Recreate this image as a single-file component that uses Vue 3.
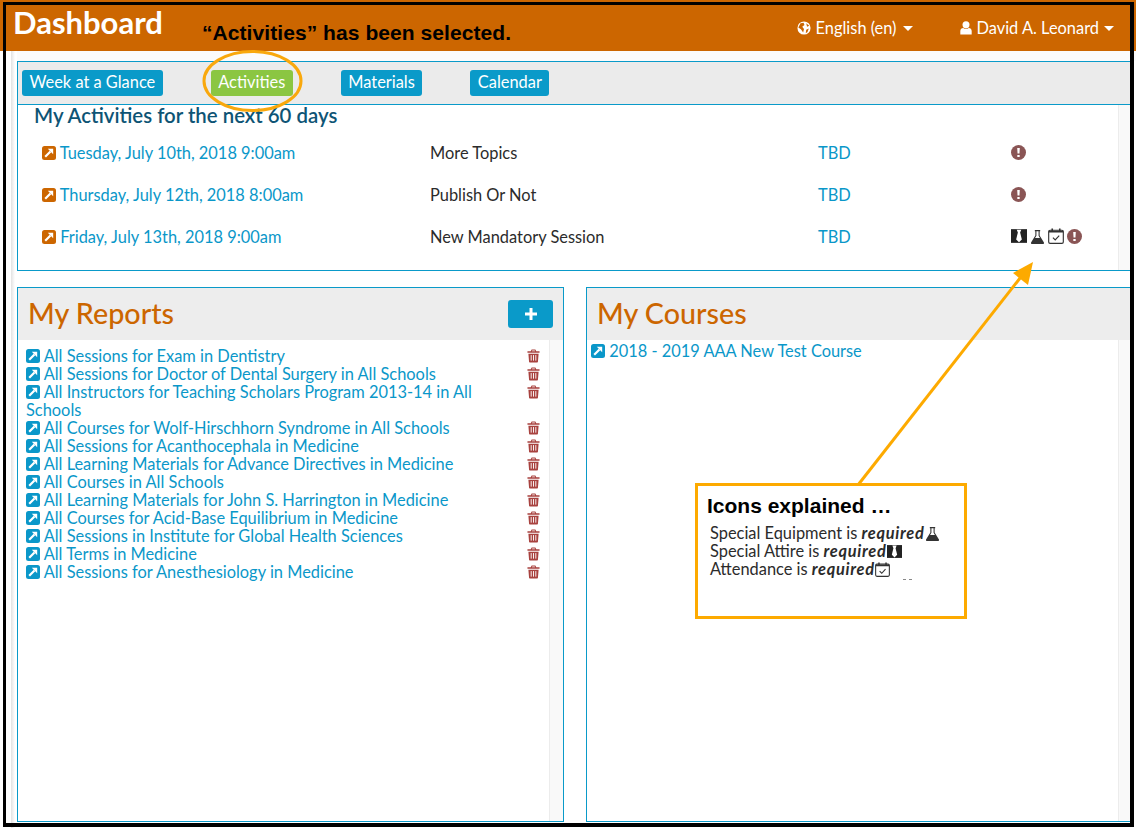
<template>
  <div class="page">
    <header class="topbar">
      <h1>Dashboard</h1>
      <div class="top-menus">
        <span class="menu lang">
          <svg viewBox="0 0 16 16" class="menu-icon"><circle cx="8" cy="8" r="7.500" fill="#fff" /><path d="M4 2.500 7.500 2l1 2.500-2.500 2 2 2.500-1 4-2.500-3.500L1.500 7.500zM10.500 10l3-1.500-1.500 4-2 1.500zM10.500 2.500l3.500 3-2.500 1z" fill="#cc6600" /></svg>
          English (en)
          <i class="caret"></i>
        </span>
        <span class="menu user">
          <svg viewBox="0 0 16 16" class="menu-icon"><circle cx="8" cy="4.200" r="4" fill="#fff" /><path d="M1.500 15.500V11.500c0-2.300 1.500-3.500 3.300-3.500 1.800 1.300 4.600 1.300 6.400 0 1.800 0 3.300 1.200 3.300 3.500v4z" fill="#fff" /></svg>
          David A. Leonard
          <i class="caret"></i>
        </span>
      </div>
    </header>

    <main class="main">
      <div class="gutter"></div>
      <div class="content">
        <nav class="tabs">
          <button v-for="tab in tabs" :key="tab" class="tab" :class="{ active: tab === 'Activities' }">{{ tab }}</button>
        </nav>

        <section class="activities">
          <div class="activities-body">
            <h2>My Activities for the next 60 days</h2>
            <div v-for="item in activities" :key="item.date" class="activity">
              <a class="date">
                <svg viewBox="0 0 14 14" class="ext orange"><rect width="14" height="14" rx="2.500" /><path d="M3.200 10.800 8.500 5.500" class="ext-arrow" /><path d="M5.800 2.800h5.400v5.400z" fill="#fff" /></svg>
                {{ item.date }}
              </a>
              <span>{{ item.title }}</span>
              <a>TBD</a>
              <span class="status">
                <template v-if="item.required">
                  <svg viewBox="0 0 14 14" class="status-icon wide"><path d="M0 1h14v12H0z" fill="#222" /><path d="M5 1.500h4L8 4l1.500 6L7 12.500 4.500 10 6 4z" fill="#fff" /></svg>
                  <svg viewBox="0 0 14 14" class="status-icon"><path d="M4.500 1h5v1H9v4l4 6.500c.3.700 0 1.500-1 1.500H2c-1 0-1.300-.8-1-1.500L5 6V2h-.5z" fill="#333" /><path d="M6 2h2v4.300L9.300 8.500H4.700L6 6.300z" fill="#fff" /></svg>
                  <svg viewBox="0 0 14 14" class="status-icon wide"><rect x=".6" y="2" width="12.800" height="11.400" rx="1.200" fill="#fff" stroke="#333" stroke-width="1" /><path d="M.6 2.500h12.800v1.500H.6zM3 .5h1.400v2.800H3zM9.600 .5H11v2.800H9.600z" fill="#333" /><path d="m4.300 8.500 2 2 3.500-3.800" fill="none" stroke="#333" stroke-width="1" /></svg>
                </template>
                <svg viewBox="0 0 14 14" class="status-icon"><circle cx="7" cy="7" r="7" fill="#8a5555" /><path d="M5.800 2.800h2.400L7.900 8H6.100z M5.900 9.300h2.200v2H5.900z" fill="#fff" /></svg>
              </span>
            </div>
          </div>
          <div class="strip"></div>
        </section>

        <div class="columns">
          <section class="panel reports">
            <div class="panel-head">
              <h3>My Reports</h3>
              <button class="add">
                <svg viewBox="0 0 14 14"><path d="M5.500 1h3v4.500H13v3H8.500V13h-3V8.500H1v-3h4.500z" fill="#fff" /></svg>
              </button>
            </div>
            <div class="panel-body">
              <ul class="report-list">
                <li v-for="report in reports" :key="report">
                  <a>
                    <svg viewBox="0 0 14 14" class="ext"><rect width="14" height="14" rx="2.500" /><path d="M3.200 10.800 8.500 5.500" class="ext-arrow" /><path d="M5.800 2.800h5.400v5.400z" fill="#fff" /></svg>
                    {{ report }}
                  </a>
                  <svg viewBox="0 0 14 14" class="trash"><path d="M5 0h4l1 2h3.500v1.500h-13V2H4zM5.700 1 5.300 2h3.400l-.4-1zM1.500 4.500h11l-.7 8.300c0 .7-.5 1.200-1.200 1.200H3.400c-.7 0-1.200-.5-1.200-1.200z" fill="#a8423f" /><path d="M4.500 6v6M7 6v6M9.500 6v6" stroke="#fff" stroke-width="1" /></svg>
                </li>
              </ul>
              <div class="strip"></div>
            </div>
          </section>

          <section class="panel courses">
            <div class="panel-head">
              <h3>My Courses</h3>
            </div>
            <div class="panel-body">
              <div class="course-list">
                <a>
                  <svg viewBox="0 0 14 14" class="ext"><rect width="14" height="14" rx="2.500" /><path d="M3.200 10.800 8.500 5.500" class="ext-arrow" /><path d="M5.800 2.800h5.400v5.400z" fill="#fff" /></svg>
                  2018 - 2019 AAA New Test Course
                </a>
              </div>
              <div class="strip"></div>
            </div>
          </section>
        </div>
      </div>
    </main>

    <!-- annotations pasted over the screenshot -->
    <div class="frame"></div>
    <div class="note">“Activities” has been selected.</div>
    <svg class="marks" viewBox="0 0 1136 828">
      <ellipse cx="252.500" cy="81" rx="48.500" ry="29.500" fill="none" stroke="#f9a80c" stroke-width="3" />
      <path d="M858 485 1024 273" fill="none" stroke="#fdaa00" stroke-width="3" />
      <path d="M1033 262 1028 285 1013 273z" fill="#fdaa00" />
    </svg>
    <div class="callout">
      <h4>Icons explained …</h4>
      <p>
        Special Equipment is <b>required</b>
        <svg viewBox="0 0 14 14" class="status-icon"><path d="M4.500 1h5v1H9v4l4 6.500c.3.700 0 1.500-1 1.500H2c-1 0-1.300-.8-1-1.500L5 6V2h-.5z" fill="#333" /><path d="M6 2h2v4.300L9.300 8.500H4.700L6 6.300z" fill="#fff" /></svg>
      </p>
      <p>
        Special Attire is <b>required</b>
        <svg viewBox="0 0 14 14" class="status-icon"><path d="M0 1h14v12H0z" fill="#222" /><path d="M5 1.500h4L8 4l1.500 6L7 12.500 4.500 10 6 4z" fill="#fff" /></svg>
      </p>
      <p>
        Attendance is <b>required</b>
        <svg viewBox="0 0 14 14" class="status-icon"><rect x=".6" y="2" width="12.800" height="11.400" rx="1.200" fill="#fff" stroke="#333" stroke-width="1" /><path d="M.6 2.500h12.800v1.500H.6zM3 .5h1.400v2.800H3zM9.600 .5H11v2.800H9.600z" fill="#333" /><path d="m4.300 8.500 2 2 3.500-3.800" fill="none" stroke="#333" stroke-width="1" /></svg>
      </p>
      <span class="specks"></span>
    </div>
  </div>
</template>

<script setup>
const tabs = ["Week at a Glance", "Activities", "Materials", "Calendar"];

const activities = [
  { date: "Tuesday, July 10th, 2018 9:00am", title: "More Topics", required: false },
  { date: "Thursday, July 12th, 2018 8:00am", title: "Publish Or Not", required: false },
  { date: "Friday, July 13th, 2018 9:00am", title: "New Mandatory Session", required: true },
];

const reports = [
  "All Sessions for Exam in Dentistry",
  "All Sessions for Doctor of Dental Surgery in All Schools",
  "All Instructors for Teaching Scholars Program 2013-14 in All Schools",
  "All Courses for Wolf-Hirschhorn Syndrome in All Schools",
  "All Sessions for Acanthocephala in Medicine",
  "All Learning Materials for Advance Directives in Medicine",
  "All Courses in All Schools",
  "All Learning Materials for John S. Harrington in Medicine",
  "All Courses for Acid-Base Equilibrium in Medicine",
  "All Sessions in Institute for Global Health Sciences",
  "All Terms in Medicine",
  "All Sessions for Anesthesiology in Medicine",
];
</script>

<style>
html,
body {
  margin: 0;
  background: #fff;
}
</style>

<style scoped>
.page {
  position: relative;
  width: 1136px;
  height: 828px;
  overflow: hidden;
  font-family: Lato, "Noto Sans", sans-serif;
  font-size: 16.4px;
  color: #2b2b2b;
  background: #fff;
}

a {
  color: #0a97c9;
}

.topbar {
  height: 51px;
  background: #cc6600;
  color: #fff;
  display: flex;
  justify-content: space-between;
  padding: 0 22px 0 13px;
  box-sizing: border-box;
}

.topbar h1 {
  margin: 4px 0 0;
  font-size: 31px;
  line-height: 36px;
  font-weight: 700;
}

.top-menus {
  display: flex;
  gap: 46px;
  padding-top: 18px;
  line-height: 20px;
}

.menu {
  display: flex;
  align-items: center;
  height: 20px;
  gap: 4px;
}

.lang {
  gap: 5px;
}

.menu-icon {
  width: 14px;
  height: 14px;
}

.caret {
  width: 0;
  height: 0;
  margin-left: 1px;
  border-left: 5.500px solid transparent;
  border-right: 5.500px solid transparent;
  border-top: 5.500px solid #fff;
}

.main {
  display: flex;
  height: 777px;
  padding-left: 11px;
  box-sizing: border-box;
}

.gutter {
  width: 4px;
  background: linear-gradient(to right, #e2e2e2, #fff);
}

.content {
  flex: 1;
  margin-left: 2px;
  padding-top: 10px;
  padding-right: 4px;
  display: flex;
  flex-direction: column;
  background: linear-gradient(#fbfbfb 10px, #fff 10px);
}

.tabs {
  height: 44px;
  box-sizing: border-box;
  display: flex;
  align-items: flex-start;
  gap: 48px;
  padding: 8px 0 0 4px;
  background: #ebebeb;
  border: 1px solid #0a9ac9;
  border-right: none;
}

.tab {
  height: 26px;
  padding: 0 7.500px 2px;
  border: none;
  border-radius: 3px;
  background: #0a9ac9;
  color: #fff;
  font: inherit;
  line-height: 24px;
}

.tab.active {
  background: #8bc642;
}

.activities {
  height: 166px;
  box-sizing: border-box;
  display: flex;
  border-left: 1px solid #0a9ac9;
  border-bottom: 1px solid #0a9ac9;
}

.activities-body {
  flex: 1;
  padding-left: 16px;
}

.activities h2 {
  margin: -2px 0 4px;
  font-size: 20.400px;
  line-height: 24px;
  font-weight: 600;
  color: #0e5475;
}

.activity {
  display: grid;
  grid-template-columns: 388px 388px 193px 1fr;
  align-items: center;
  height: 42px;
  padding-left: 8px;
}

.status {
  display: flex;
  align-items: center;
  gap: 3px;
}

.status-icon {
  width: 15px;
  height: 15px;
  vertical-align: -2px;
}

.status-icon.wide {
  width: 16px;
  height: 16px;
}

.strip {
  width: 13px;
  flex: none;
  background: #f9f9f9;
  border-left: 1px solid #ececec;
}

.ext {
  width: 14px;
  height: 14px;
  fill: #0a97c9;
  vertical-align: -1px;
}

.ext.orange {
  fill: #cc6600;
}

.ext-arrow {
  fill: none;
  stroke: #fff;
  stroke-width: 2.200;
}

.columns {
  flex: 1;
  display: grid;
  grid-template-columns: 547px 1fr;
  gap: 22px;
  margin: 16px 0 6px;
  min-height: 0;
}

.panel {
  display: flex;
  flex-direction: column;
  border: 1px solid #0a9ac9;
  min-height: 0;
}

.courses {
  border-right: none;
}

.panel-head {
  height: 52px;
  flex: none;
  display: flex;
  align-items: center;
  justify-content: space-between;
  padding: 0 10px;
  background: #ededed;
}

.panel-head h3 {
  margin: 0 0 2px;
  font-size: 28.700px;
  font-weight: 500;
  color: #cc6600;
}

.add {
  width: 45px;
  height: 28px;
  border: none;
  border-radius: 3px;
  background: #0a9ac9;
  display: flex;
  align-items: center;
  justify-content: center;
  padding: 0;
}

.add svg {
  width: 14px;
  height: 14px;
}

.panel-body {
  flex: 1;
  display: flex;
  min-height: 0;
}

.report-list {
  flex: 1;
  list-style: none;
  margin: 0;
  padding: 7px 9px 0 8px;
  line-height: 18px;
}

.report-list li {
  display: flex;
  justify-content: space-between;
  align-items: flex-start;
}

.report-list a {
  width: 460px;
}

.trash {
  width: 13px;
  height: 14px;
  margin-top: 2px;
}

.course-list {
  flex: 1;
  padding: 1px 4px;
  line-height: 20px;
}

.frame {
  position: absolute;
  left: 3px;
  top: 2px;
  width: 1131px;
  height: 825px;
  box-sizing: border-box;
  border: solid #000;
  border-width: 3px 4px 4px 3px;
}

.note {
  position: absolute;
  left: 202px;
  top: 21px;
  font-family: "Liberation Sans", sans-serif;
  font-size: 21px;
  letter-spacing: 0.07px;
  font-weight: 700;
  line-height: 24px;
  color: #000;
}

.marks {
  position: absolute;
  left: 0;
  top: 0;
  width: 1136px;
  height: 828px;
  pointer-events: none;
}

.callout {
  position: absolute;
  left: 695px;
  top: 483px;
  width: 272px;
  height: 136px;
  box-sizing: border-box;
  padding: 7px 9px;
  background: #fff;
  border: 3px solid #fdaa00;
}

.callout h4 {
  margin: 0 0 5px;
  font-family: "Liberation Sans", sans-serif;
  font-size: 21px;
  line-height: 26px;
  font-weight: 700;
  color: #000;
}

.callout p {
  margin: 0 0 0 3px;
  line-height: 18px;
}

.callout b {
  font-style: italic;
  letter-spacing: 0.7px;
}

.specks {
  position: absolute;
  left: 205px;
  top: 93px;
  width: 9px;
  height: 1px;
  background: linear-gradient(to right, #888 3px, transparent 3px, transparent 6px, #888 6px);
}
</style>
